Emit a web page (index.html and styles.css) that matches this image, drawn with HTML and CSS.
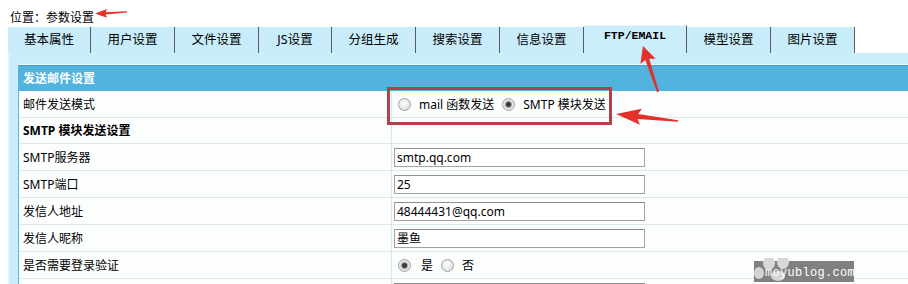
FILE: index.html
```html
<!DOCTYPE html>
<html>
<head>
<meta charset="utf-8">
<title>参数设置</title>
<link rel="stylesheet" href="styles.css">
</head>
<body>
<div class="loc">位置：参数设置</div>
<div class="tabs">
  <div class="tab first">基本属性</div>
  <div class="tab">用户设置</div>
  <div class="tab">文件设置</div>
  <div class="tab js">JS设置</div>
  <div class="tab">分组生成</div>
  <div class="tab">搜索设置</div>
  <div class="tab">信息设置</div>
  <div class="tab active">FTP/EMAIL</div>
  <div class="tab">模型设置</div>
  <div class="tab">图片设置</div>
</div>
<div class="panel">
  <div class="table">
    <div class="head">发送邮件设置</div>
    <div class="row">
      <div class="label">邮件发送模式</div>
      <div class="value">
        <div class="opts">
          <span class="radio"></span><span class="opt">mail 函数发送</span>
          <span class="radio on"></span><span class="opt">SMTP 模块发送</span>
        </div>
      </div>
    </div>
    <div class="row sub"><div class="label bold">SMTP 模块发送设置</div></div>
    <div class="row"><div class="label">SMTP服务器</div><div class="value"><div class="input">smtp.qq.com</div></div></div>
    <div class="row"><div class="label">SMTP端口</div><div class="value"><div class="input">25</div></div></div>
    <div class="row"><div class="label">发信人地址</div><div class="value"><div class="input">48444431@qq.com</div></div></div>
    <div class="row"><div class="label">发信人昵称</div><div class="value"><div class="input">墨鱼</div></div></div>
    <div class="row">
      <div class="label">是否需要登录验证</div>
      <div class="value">
        <div class="opts">
          <span class="radio on"></span><span class="opt yes">是</span>
          <span class="radio"></span><span class="opt">否</span>
        </div>
      </div>
    </div>
    <div class="row"><div class="label"></div><div class="value"><div class="input"></div></div></div>
  </div>
</div>

<svg class="notes" width="908" height="284" viewBox="0 0 908 284" xmlns="http://www.w3.org/2000/svg">
  <rect x="388.5" y="88.5" width="222" height="35" fill="none" stroke="#b3414a" stroke-width="3"/>
  <polygon fill="#e2302b" points="95,13.5 107,9 105.5,12.3 127,11.2 127,12.4 105.5,14.6 107,17.8"/>
  <polygon fill="#e2302b" points="643,46 655.6,58.7 649.2,58.7 659,91.7 657,92.3 645.4,59.9 640.4,63.7"/>
  <polygon fill="#e2302b" points="616,114 641.8,108.8 638.2,114 678.1,120.2 677.9,121.8 637.6,119 640,124.8"/>
</svg>

<div class="wm">
  <svg class="paw" width="100" height="23" viewBox="0 0 100 23" xmlns="http://www.w3.org/2000/svg">
    <ellipse cx="15" cy="5" rx="6" ry="7" fill="#d8d8d8"/>
    <ellipse cx="29" cy="4" rx="6" ry="7" fill="#d8d8d8"/>
    <ellipse cx="5" cy="15" rx="5" ry="6" fill="#d4d4d4"/>
    <ellipse cx="24" cy="18" rx="7" ry="5" fill="#d4d4d4"/>
  </svg>
  <span class="wm-text">moyublog.com</span>
</div>
</body>
</html>
```

FILE: styles.css
```css
* {
  box-sizing: border-box;
  margin: 0;
  padding: 0;
}

html, body {
  width: 908px;
  height: 284px;
  overflow: hidden;
  background: #fff;
}

body {
  position: relative;
  font-family: "Noto Sans", "Noto Sans CJK SC", sans-serif;
  font-size: 12px;
  color: #000;
}

.loc {
  height: 25px;
  padding: 10px 0 0 10px;
  line-height: 16px;
}

.tabs {
  display: flex;
  align-items: flex-end;
  height: 28px;
  padding-left: 8px;
}

.tab {
  width: 84px;
  height: 26px;
  background: #c8ecf9;
  border-right: 1px solid #5c5c5c;
  text-align: center;
  line-height: 26px;
  font-size: 12.5px;
  flex: none;
}

.tab.first { width: 83px; }
.tab.js { width: 73px; }

.tab.active {
  width: 103px;
  height: 28px;
  background: #cbeefb;
  border-top: 1px solid #eaf9fe;
  font-family: "Liberation Mono", monospace;
  font-weight: bold;
  font-size: 11.5px;
  line-height: 20px;
}

.panel {
  margin-left: 8px;
  padding: 12px 0 0 9px;
  background: #c9edfa;
  border-left: 1px solid #e4f6fd;
  height: 231px;
}

.table {
  border-left: 1px solid #58b4dc;
  border-top: 1px solid #3d9ecb;
  box-shadow: 0 -1px 0 #f0fbff;
  background: #fcfefe;
}

.head {
  height: 25px;
  padding: 1px 0 0 4px;
  background: #51b3de;
  color: #fff;
  font-weight: bold;
  line-height: 24px;
}

.row {
  display: flex;
  height: 27px;
  border-bottom: 1px solid #dbe8e8;
}

.row.sub { height: 26px; }

.label {
  width: 373px;
  flex: none;
  padding: 1px 0 0 4px;
  border-right: 1px solid #dbe8e8;
  line-height: 25px;
}

.row.sub .label {
  line-height: 24px;
}

.bold { font-weight: bold; }

.value {
  flex: 1;
  display: flex;
  align-items: center;
  padding-left: 2px;
}

.input {
  width: 251px;
  height: 19px;
  padding: 1px 2px 0;
  border: 1px solid #a3a3a3;
  border-top-color: #8e8e8e;
  background: #fff;
  line-height: 16px;
}

.opts {
  display: flex;
  align-items: center;
  padding: 1px 0 0 4px;
}

.radio {
  width: 13px;
  height: 13px;
  flex: none;
  border-radius: 50%;
  border: 1px solid #a0a0a0;
  background: radial-gradient(circle at 45% 40%, #ffffff 0, #f3f3f3 30%, #d2d2d2 100%);
}

.radio.on {
  background: radial-gradient(circle, #3a3a3a 0 2px, #9a9a9a 2.8px, #dcdcdc 4px, #f4f4f4 6px);
}

.opt {
  margin: 0 8px 0 8px;
  line-height: 16px;
}

.opt.yes {
  margin-left: 10px;
}

.notes {
  position: absolute;
  left: 0;
  top: 0;
  pointer-events: none;
}

.wm {
  position: absolute;
  left: 754px;
  top: 261px;
  width: 100px;
  height: 21px;
  background: #808080;
  overflow: visible;
}

.paw {
  position: absolute;
  left: 0;
  top: -3px;
}

.wm-text {
  position: relative;
  display: block;
  padding-left: 11px;
  font-family: "Liberation Mono", monospace;
  font-size: 12px;
  line-height: 24px;
  color: #fff;
  letter-spacing: 0.3px;
}
```
